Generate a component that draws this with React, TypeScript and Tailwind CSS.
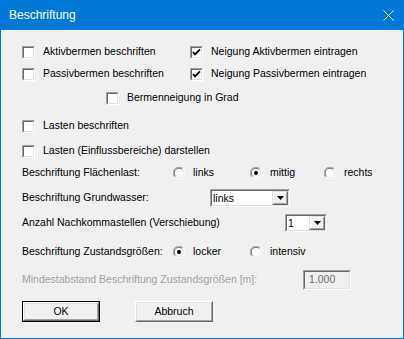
import React from "react";

const font = { fontFamily: '"Liberation Sans", Arial, sans-serif' };

function Sunken({ className = "", children }: { className?: string; children?: React.ReactNode }) {
  return (
    <div className={`border border-t-[#a0a0a0] border-l-[#a0a0a0] border-b-white border-r-white ${className}`}>
      <div className="h-full w-full border border-t-[#696969] border-l-[#696969] border-b-[#e3e3e3] border-r-[#e3e3e3]">
        {children}
      </div>
    </div>
  );
}

function Check({ checked = false }: { checked?: boolean }) {
  return (
    <Sunken className="w-[13px] h-[13px] shrink-0">
      <div className="h-full w-full bg-white flex items-center justify-center">
        {checked && (
          <svg width="9" height="9" viewBox="0 0 9 9">
            <path d="M1 4 L3 6.3 L8 1.3" stroke="#000" strokeWidth="1.9" fill="none" />
          </svg>
        )}
      </div>
    </Sunken>
  );
}

function Radio({ checked = false }: { checked?: boolean }) {
  return (
    <svg width="12" height="12" viewBox="0 0 12 12" className="shrink-0">
      <circle cx="6" cy="6" r="5.5" fill="#fff" />
      <path d="M1.8 10.2 A5.5 5.5 0 0 1 10.2 1.8" stroke="#a0a0a0" strokeWidth="1" fill="none" />
      <path d="M10.2 1.8 A5.5 5.5 0 0 1 1.8 10.2" stroke="#ffffff" strokeWidth="1" fill="none" />
      <path d="M2.6 9.4 A4.5 4.5 0 0 1 9.4 2.6" stroke="#696969" strokeWidth="1" fill="none" />
      <path d="M9.4 2.6 A4.5 4.5 0 0 1 2.6 9.4" stroke="#e3e3e3" strokeWidth="1" fill="none" />
      {checked && <circle cx="6" cy="6" r="2" fill="#000" />}
    </svg>
  );
}

function CheckRow({ label, checked }: { label: string; checked?: boolean }) {
  return (
    <div className="flex items-center gap-2">
      <Check checked={checked} />
      <span>{label}</span>
    </div>
  );
}

function RadioItem({ label, checked, w }: { label: string; checked?: boolean; w: string }) {
  return (
    <div className={`flex items-center gap-2 ${w}`}>
      <Radio checked={checked} />
      <span>{label}</span>
    </div>
  );
}

function Combo({ value, className }: { value: string; className: string }) {
  return (
    <Sunken className={className}>
      <div className="h-full w-full bg-white flex items-center">
        <span className="pl-[1px] flex-1 leading-none">{value}</span>
        <div className="h-full w-[16px] border border-t-[#e3e3e3] border-l-[#e3e3e3] border-b-[#696969] border-r-[#696969]">
          <div className="h-full w-full bg-[#f0f0f0] border border-t-white border-l-white border-b-[#a0a0a0] border-r-[#a0a0a0] flex items-center justify-center">
            <svg width="7" height="4" viewBox="0 0 7 4">
              <path d="M0 0 H7 L3.5 4 Z" fill="#000" />
            </svg>
          </div>
        </div>
      </div>
    </Sunken>
  );
}

function Button({ label, def }: { label: string; def?: boolean }) {
  const body = (
    <div className="h-full w-full border border-t-white border-l-white border-b-[#696969] border-r-[#696969]">
      <div className="h-full w-full border border-t-[#e3e3e3] border-l-[#e3e3e3] border-b-[#a0a0a0] border-r-[#a0a0a0] flex items-center justify-center">
        {label}
      </div>
    </div>
  );
  return def ? (
    <div className="w-[78px] h-[21px] border border-black">{body}</div>
  ) : (
    <div className="w-[78px] h-[21px]">{body}</div>
  );
}

export default function App() {
  return (
    <div className="w-[404px] h-[339px] bg-[#0078d7] flex flex-col text-[10.5px] text-black" style={font}>
      <div className="h-[30px] flex items-center justify-between pl-[9px] pr-[10px] text-white text-[12px]">
        <span>Beschriftung</span>
        <svg width="11" height="11" viewBox="0 0 11 11">
          <path d="M0.5 0.5 L10.5 10.5 M10.5 0.5 L0.5 10.5" stroke="#fff" strokeWidth="1" />
        </svg>
      </div>
      <div className="flex-1 mx-[1px] mb-[1px] bg-[#f0f0f0] pl-[21px] pt-[11px] flex flex-col">
        <div className="h-[22px] flex items-center">
          <div className="w-[168px]"><CheckRow label="Aktivbermen beschriften" /></div>
          <CheckRow label="Neigung Aktivbermen eintragen" checked />
        </div>
        <div className="h-[22px] flex items-center">
          <div className="w-[168px]"><CheckRow label="Passivbermen beschriften" /></div>
          <CheckRow label="Neigung Passivbermen eintragen" checked />
        </div>
        <div className="h-[26px] flex items-center pl-[84px]">
          <CheckRow label="Bermenneigung in Grad" />
        </div>
        <div className="h-[30px] flex items-center">
          <CheckRow label="Lasten beschriften" />
        </div>
        <div className="h-[20px] flex items-center">
          <CheckRow label="Lasten (Einflussbereiche) darstellen" />
        </div>
        <div className="h-[24px] flex items-center">
          <span className="w-[151px]">Beschriftung Flächenlast:</span>
          <RadioItem label="links" w="w-[77px]" />
          <RadioItem label="mittig" checked w="w-[74px]" />
          <RadioItem label="rechts" w="" />
        </div>
        <div className="h-[26px] flex items-center">
          <span className="w-[188px]">Beschriftung Grundwasser:</span>
          <Combo value="links" className="w-[80px] h-[18px]" />
        </div>
        <div className="h-[24px] flex items-center">
          <span className="w-[263px]">Anzahl Nachkommastellen (Verschiebung)</span>
          <Combo value="1" className="w-[42px] h-[18px]" />
        </div>
        <div className="h-[34px] flex items-center">
          <span className="w-[151px]">Beschriftung Zustandsgrößen:</span>
          <RadioItem label="locker" checked w="w-[77px]" />
          <RadioItem label="intensiv" w="" />
        </div>
        <div className="h-[22px] flex items-center">
          <span className="w-[281px] text-[#a0a0a0]">Mindestabstand Beschriftung Zustandsgrößen [m]:</span>
          <Sunken className="w-[48px] h-[20px]">
            <div className="h-full w-full flex items-center pl-[4px] text-[#6d6d6d]">1.000</div>
          </Sunken>
        </div>
        <div className="mt-[10px] flex gap-[35px]">
          <Button label="OK" def />
          <Button label="Abbruch" />
        </div>
      </div>
    </div>
  );
}
